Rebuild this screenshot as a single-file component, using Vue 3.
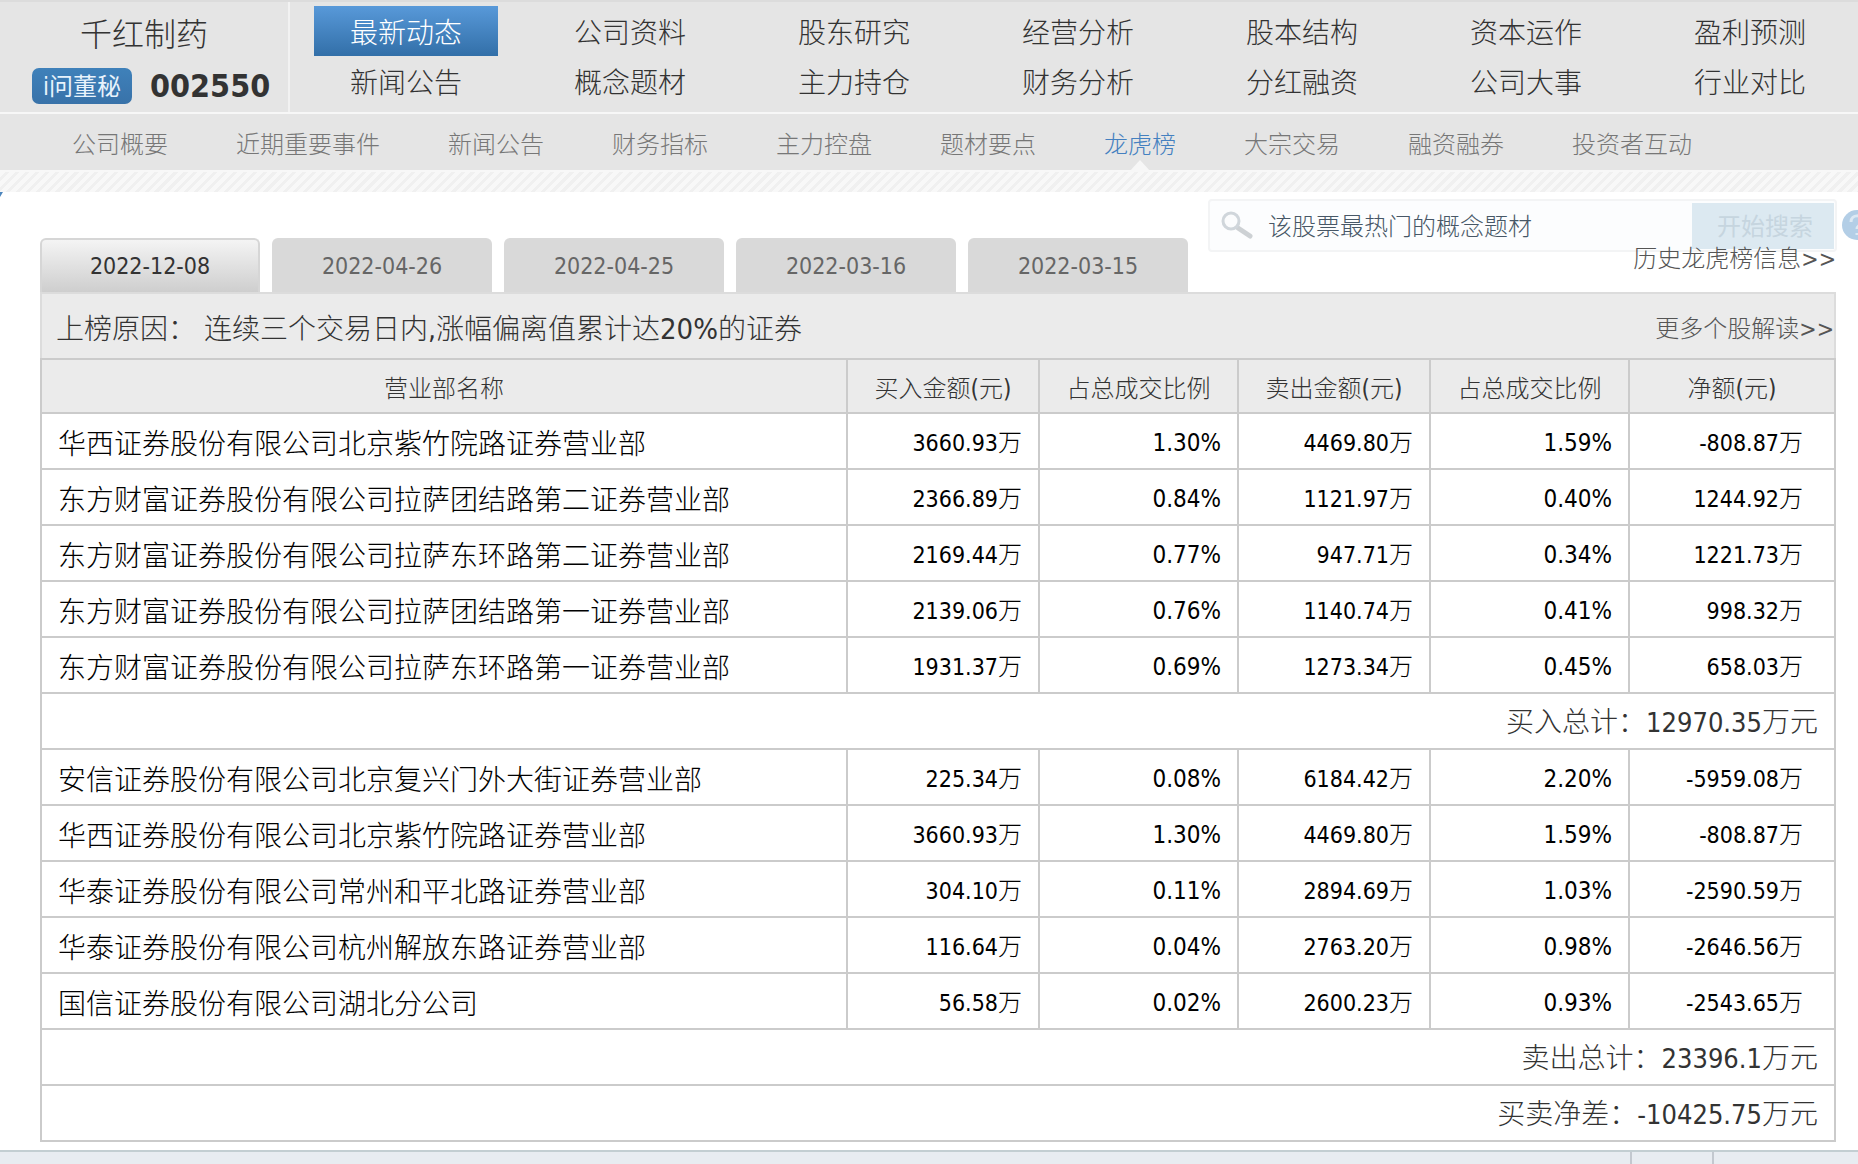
<script setup>
const mainNav = [
  ['最新动态', '公司资料', '股东研究', '经营分析', '股本结构', '资本运作', '盈利预测'],
  ['新闻公告', '概念题材', '主力持仓', '财务分析', '分红融资', '公司大事', '行业对比']
]
const subNav = ['公司概要', '近期重要事件', '新闻公告', '财务指标', '主力控盘', '题材要点', '龙虎榜', '大宗交易', '融资融券', '投资者互动']
const dates = ['2022-12-08', '2022-04-26', '2022-04-25', '2022-03-16', '2022-03-15']
const heads = ['营业部名称', '买入金额(元)', '占总成交比例', '卖出金额(元)', '占总成交比例', '净额(元)']
const groups = [
  {
    rows: [
      ['华西证券股份有限公司北京紫竹院路证券营业部', '3660.93', '1.30%', '4469.80', '1.59%', '-808.87'],
      ['东方财富证券股份有限公司拉萨团结路第二证券营业部', '2366.89', '0.84%', '1121.97', '0.40%', '1244.92'],
      ['东方财富证券股份有限公司拉萨东环路第二证券营业部', '2169.44', '0.77%', '947.71', '0.34%', '1221.73'],
      ['东方财富证券股份有限公司拉萨团结路第一证券营业部', '2139.06', '0.76%', '1140.74', '0.41%', '998.32'],
      ['东方财富证券股份有限公司拉萨东环路第一证券营业部', '1931.37', '0.69%', '1273.34', '0.45%', '658.03']
    ],
    totals: [['买入总计', '12970.35']]
  },
  {
    rows: [
      ['安信证券股份有限公司北京复兴门外大街证券营业部', '225.34', '0.08%', '6184.42', '2.20%', '-5959.08'],
      ['华西证券股份有限公司北京紫竹院路证券营业部', '3660.93', '1.30%', '4469.80', '1.59%', '-808.87'],
      ['华泰证券股份有限公司常州和平北路证券营业部', '304.10', '0.11%', '2894.69', '1.03%', '-2590.59'],
      ['华泰证券股份有限公司杭州解放东路证券营业部', '116.64', '0.04%', '2763.20', '0.98%', '-2646.56'],
      ['国信证券股份有限公司湖北分公司', '56.58', '0.02%', '2600.23', '0.93%', '-2543.65']
    ],
    totals: [['卖出总计', '23396.1'], ['买卖净差', '-10425.75']]
  }
]
</script>

<template>
  <div class="page">
    <header class="top">
      <div class="stock">
        <h1>千红制药</h1>
        <div class="code-line">
          <a href="#" class="ask">i问董秘</a>
          <strong>002550</strong>
        </div>
      </div>
      <nav class="main-nav">
        <template v-for="(row, r) in mainNav" :key="r">
          <a v-for="(item, i) in row" :key="item" href="#" :class="{ active: r === 0 && i === 0 }">{{ item }}</a>
        </template>
      </nav>
    </header>

    <nav class="sub-nav">
      <a v-for="item in subNav" :key="item" href="#" :class="{ current: item === '龙虎榜' }">{{ item }}</a>
    </nav>
    <div class="hatch"></div>

    <main class="content">
      <form class="search" @submit.prevent>
        <svg class="lens" viewBox="0 0 34 30" aria-hidden="true">
          <path d="M17 17 L29 25" stroke="#cdd1d4" stroke-width="5" stroke-linecap="round" />
          <circle cx="10" cy="10" r="8" fill="#fbfcfd" stroke="#d0d6db" stroke-width="3" />
        </svg>
        <input type="text" value="该股票最热门的概念题材" aria-label="搜索" />
        <button type="submit">开始搜索</button>
        <a href="#" class="help" aria-label="帮助">
          <svg viewBox="0 0 30 30" aria-hidden="true">
            <circle cx="15" cy="15" r="15" fill="#b3cee6" />
            <path d="M9 12 C9 4 21 4 21 11 C21 15 15 15 15 19 M15 23 V25" fill="none" stroke="#dce9f4" stroke-width="3" />
          </svg>
        </a>
      </form>

      <div class="tab-line">
        <div class="tabs">
          <button v-for="(d, i) in dates" :key="d" type="button" :class="{ on: i === 0 }">{{ d }}</button>
        </div>
        <a href="#" class="history">历史龙虎榜信息<span class="num">&gt;&gt;</span></a>
      </div>

      <div class="reason">
        <p>上榜原因： 连续三个交易日内,涨幅偏离值累计达<span>20%</span>的证券</p>
        <a href="#">更多个股解读<span class="num">&gt;&gt;</span></a>
      </div>

      <table>
        <colgroup>
          <col class="c-name" /><col class="c-amt" /><col class="c-pct" /><col class="c-amt" /><col class="c-pct" /><col class="c-net" />
        </colgroup>
        <thead>
          <tr><th v-for="(h, i) in heads" :key="i" scope="col">{{ h }}</th></tr>
        </thead>
        <tbody v-for="(g, gi) in groups" :key="gi">
          <tr v-for="row in g.rows" :key="row[0]">
            <td class="name">{{ row[0] }}</td>
            <td v-for="(v, i) in row.slice(1)" :key="i" :class="{ net: i === 4 }"><template v-if="v.endsWith('%')">{{ v }}</template><template v-else><span class="num">{{ v }}</span>万</template></td>
          </tr>
          <tr v-for="t in g.totals" :key="t[0]" class="total">
            <td colspan="6">{{ t[0] }}：<span class="num">{{ t[1] }}</span>万元</td>
          </tr>
        </tbody>
      </table>
    </main>

    <footer class="bottom-bar"><span></span><span></span><span></span></footer>
  </div>
</template>

<style>
body {
  margin: 0;
}
</style>

<style scoped>
.page {
  display: flex;
  flex-direction: column;
  min-height: 100vh;
  overflow: hidden;
  background: #fff;
  color: #333;
  font-family: "DejaVu Sans Condensed", "Noto Sans CJK SC", sans-serif;
  font-size: 24px;
  font-weight: 300;
  line-height: 28px;
}
.page * {
  box-sizing: border-box;
}
a {
  color: inherit;
  text-decoration: none;
}
button,
input {
  margin: 0;
  border: 0;
  padding: 0;
  font: inherit;
}
.top {
  display: flex;
  height: 114px;
  background: #e5e5e5;
  border-top: 2px solid #dcdcdc;
  border-bottom: 2px solid #f7f7f7;
}
.stock {
  display: flex;
  flex-direction: column;
  gap: 10px;
  width: 290px;
  padding-top: 10px;
  border-right: 2px solid #f2f2f2;
}
h1 {
  margin: 0;
  font-size: 32px;
  line-height: 46px;
  font-weight: inherit;
  text-align: center;
}
.code-line {
  display: flex;
  align-items: center;
  gap: 18px;
  padding-left: 32px;
}
.ask {
  width: 100px;
  height: 36px;
  padding-top: 2px;
  border-radius: 7px;
  background: linear-gradient(#3f81ba, #3872a9);
  color: #e8f3fc;
  font-weight: 400;
  line-height: 34px;
  text-align: center;
  white-space: nowrap;
}
.code-line strong {
  font-size: 32px;
  font-weight: 700;
  line-height: 36px;
}
.main-nav {
  flex: 1;
  display: grid;
  grid-template-columns: repeat(7, 184px);
  grid-auto-rows: 50px;
  justify-content: space-between;
  padding: 4px 16px 0 24px;
  font-size: 28px;
}
.main-nav a {
  padding-top: 6px;
  line-height: 44px;
  text-align: center;
}
.main-nav .active {
  background: linear-gradient(#5899d9, #326fa8);
  color: #fff;
}
.sub-nav {
  display: flex;
  gap: 68px;
  height: 58px;
  padding-left: 72px;
  background: #e5e5e5;
  border-bottom: 2px solid #f8f8f8;
  color: #777;
  white-space: nowrap;
}
.sub-nav a {
  padding-top: 6px;
  line-height: 50px;
}
.sub-nav .current {
  position: relative;
  color: #4480c0;
}
.sub-nav .current::after {
  content: "";
  position: absolute;
  left: 50%;
  bottom: -2px;
  width: 22px;
  height: 12px;
  margin-left: -11px;
  background: #f7f7f7;
  clip-path: polygon(50% 0, 100% 100%, 0 100%);
}
.hatch {
  height: 20px;
  background: repeating-linear-gradient(135deg, #f8f8f8 0 4px, #f0f0f0 4px 7px);
}
.content {
  position: relative;
  padding: 46px 22px 0 40px;
}
.content::before {
  content: "";
  position: absolute;
  left: 0;
  top: 0;
  width: 3px;
  height: 5px;
  background: #4d86bd;
  clip-path: polygon(0 0, 100% 0, 0 100%);
}
.search {
  position: absolute;
  top: 7px;
  right: 21px;
  display: flex;
  align-items: center;
  width: 629px;
  height: 53px;
  padding: 0 1px 0 11px;
  border: 2px solid #f3f4f5;
  border-radius: 4px;
  background: #fcfdfe;
}
.lens {
  width: 34px;
  height: 30px;
  fill: none;
}
.search input {
  flex: 1;
  min-width: 0;
  padding: 3px 0 0 13px;
  background: none;
  color: #475766;
}
.search button {
  width: 142px;
  height: 46px;
  padding: 3px 0 0 4px;
  background: #dce9f1;
  color: #c6d5df;
  font-weight: 400;
}
.help {
  position: absolute;
  left: 632px;
  top: 9px;
  width: 30px;
  height: 30px;
}
.help svg {
  display: block;
}
.tab-line {
  display: flex;
  justify-content: space-between;
  height: 54px;
}
.tabs {
  display: flex;
  gap: 12px;
}
.tabs button {
  width: 220px;
  height: 54px;
  padding-top: 2px;
  border-radius: 6px 6px 0 0;
  background: #d9d9d9;
  color: #666;
  font-size: 23px;
}
.tabs .on {
  padding-top: 0;
  border: 2px solid #d6d6d6;
  border-bottom: 0;
  background: linear-gradient(#f4f4f4, #cecece);
  color: #333;
}
.history {
  position: relative;
  z-index: 1;
  padding-top: 7px;
  color: #555;
}
.num {
  font-size: 23px;
}
.reason {
  display: flex;
  align-items: center;
  justify-content: space-between;
  height: 66px;
  padding: 6px 0 0 14px;
  border: 2px solid #dcdcdc;
  border-bottom: 0;
  background: #ebebeb;
}
.reason p {
  margin: 0;
  font-size: 28px;
}
.reason p span {
  font-size: 29px;
}
.reason a {
  color: #555;
}
table {
  width: 100%;
  table-layout: fixed;
  border-collapse: collapse;
  color: #000;
}
.c-amt {
  width: 192px;
}
.c-pct {
  width: 199px;
}
.c-net {
  width: 206px;
}
th,
td {
  height: 56px;
  padding: 4px 16px 0;
  border: 2px solid #cbcbcb;
  text-align: right;
  white-space: nowrap;
}
th {
  height: 54px;
  padding: 6px 0 0;
  background: #ebebeb;
  color: #333;
  font-weight: inherit;
  text-align: center;
}
.name {
  padding-top: 8px;
  font-size: 28px;
  text-align: left;
}
.net {
  padding-right: 31px;
}
.total td {
  color: #333;
  font-size: 28px;
}
.total .num {
  font-size: 27px;
}
.bottom-bar {
  flex: 1;
  display: flex;
  min-height: 14px;
  margin-top: 8px;
  border-top: 2px solid #c3ced2;
  background: #e8ecf1;
}
.bottom-bar span:first-child {
  flex: 1;
}
.bottom-bar span:nth-child(2) {
  width: 84px;
  border: solid #c3c8cf;
  border-width: 0 2px;
}
.bottom-bar span:last-child {
  width: 144px;
}
</style>
